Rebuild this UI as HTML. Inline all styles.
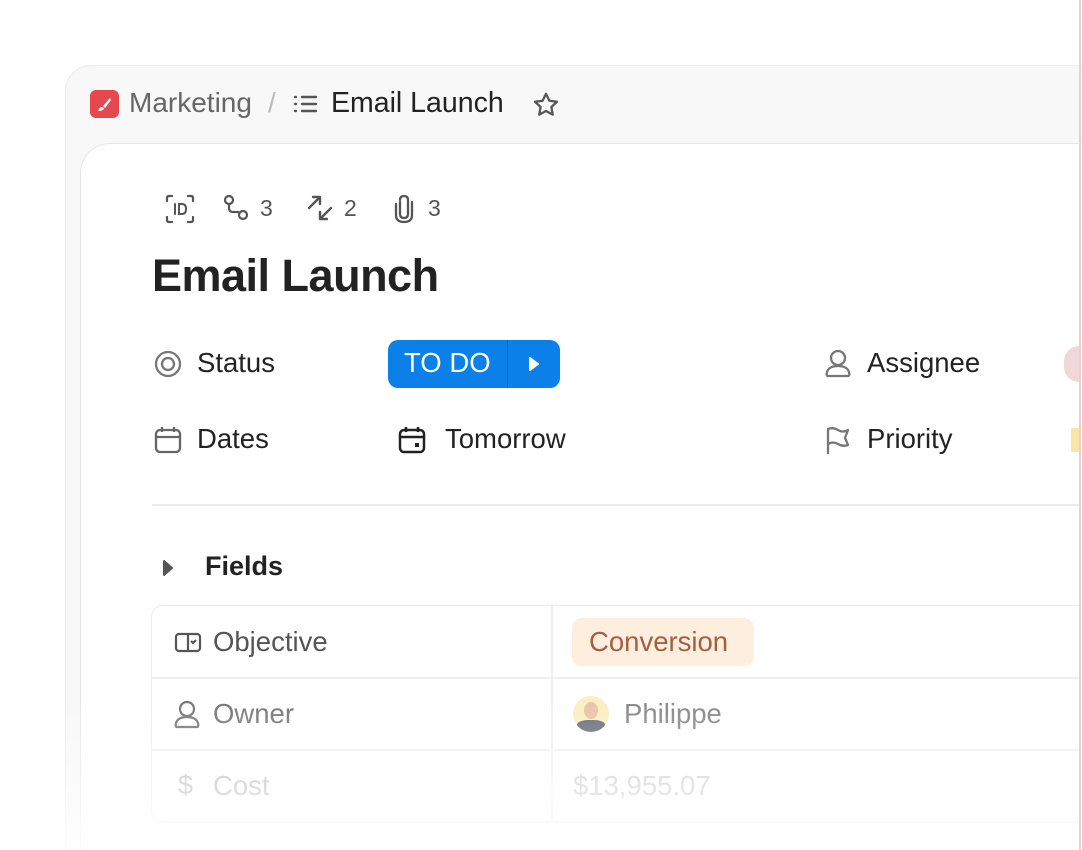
<!DOCTYPE html>
<html style="width:1082px;height:850px;overflow:hidden"><head><meta charset="utf-8"><style>
*{margin:0;padding:0;box-sizing:border-box}
body{width:1082px;height:850px;overflow:hidden;background:#fff;font-family:"Liberation Sans",sans-serif;position:relative}
.outer{position:absolute;left:65px;top:65px;width:1017px;height:785px;background:#f8f8f8;border:1px solid #ececec;border-bottom:none;border-right:none;border-radius:26px 0 0 0}
.card{position:absolute;left:80px;top:143px;width:1002px;height:707px;background:#fff;border:1px solid #e6e6e6;border-bottom:none;border-right:none;border-radius:30px 0 0 0}
.t{position:absolute;white-space:nowrap}
.fade{position:absolute;left:0;top:600px;width:1082px;height:250px;background:linear-gradient(rgba(255,255,255,0),rgba(255,255,255,0) 40%,rgba(255,255,255,.85));pointer-events:none}
.vline{position:absolute;left:1079px;top:0;width:2px;height:850px;background:#d8d8d8}
svg{position:absolute}
.wrap{position:absolute;left:0;top:0;width:1082px;height:850px;overflow:hidden}
</style></head><body><div class="wrap">
<div class="outer"></div>
<div style="position:absolute;left:90px;top:90px;width:29px;height:28px;background:#e5484d;border-radius:6px"></div>
<svg style="left:95px;top:95px" width="19" height="19" viewBox="0 0 19 19"><path d="M15 3 L8 11 L10 13 L16 5Z M7 12 C4 12 4 15 3 16 C6 16 9 15 9 13Z" fill="#fff"/></svg>
<div class="t" style="left:129px;top:87px;font-size:28px;color:#666">Marketing</div>
<div class="t" style="left:268px;top:87px;font-size:28px;color:#bbb">/</div>
<svg style="left:293px;top:93px" width="26" height="22" viewBox="0 0 26 22" stroke="#555" stroke-width="2.4" stroke-linecap="round"><path d="M2 4h1M9 4h14M2 11h1M9 11h14M2 18h1M9 18h14"/></svg>
<div class="t" style="left:331px;top:87px;font-size:28.5px;color:#222">Email Launch</div>
<svg style="left:531px;top:90px" width="30" height="30" viewBox="0 0 24 24" fill="none" stroke="#555" stroke-width="1.8" stroke-linejoin="round"><path d="M12 3l2.7 5.6 6.1.8-4.5 4.2 1.1 6.1L12 16.8 6.6 19.7l1.1-6.1L3.2 9.4l6.1-.8z"/></svg>
<div class="card"></div>
<svg style="left:165px;top:194px" width="30" height="30" viewBox="0 0 30 30" fill="none" stroke="#555" stroke-width="2.2" stroke-linecap="round"><path d="M2 7V4Q2 2 4 2H7M23 2h3q2 0 2 2v3M28 23v3q0 2-2 2h-3M7 28H4q-2 0-2-2v-3"/><path d="M10 10v10M14 10h3q4 0 4 5t-4 5h-3z" stroke-width="2"/></svg>
<svg style="left:222px;top:194px" width="28" height="28" viewBox="0 0 28 28" fill="none" stroke="#555" stroke-width="2.2"><circle cx="7" cy="6" r="4"/><circle cx="21" cy="21" r="4"/><path d="M7 10v4q0 4 4 4h6"/></svg>
<div class="t" style="left:260px;top:195px;font-size:23px;color:#555">3</div>
<svg style="left:306px;top:194px" width="28" height="28" viewBox="0 0 28 28" fill="none" stroke="#555" stroke-width="2.4" stroke-linecap="round" stroke-linejoin="round"><path d="M3 14L14 3M7 3h7v7M25 14L14 25M21 25h-7v-7"/></svg>
<div class="t" style="left:344px;top:195px;font-size:23px;color:#555">2</div>
<svg style="left:392px;top:194px" width="24" height="30" viewBox="0 0 24 30" fill="none" stroke="#555" stroke-width="2.3" stroke-linecap="round"><path d="M8 8v12q0 4 4 4t4-4V6q0-4-4-4t-4 4M4 10v11q0 7 8 7t8-7V8"/></svg>
<div class="t" style="left:428px;top:195px;font-size:23px;color:#555">3</div>
<div class="t" style="left:152px;top:250px;font-size:45px;font-weight:bold;color:#222;letter-spacing:-0.5px">Email Launch</div>
<svg style="left:154px;top:350px" width="28" height="28" viewBox="0 0 28 28" fill="none" stroke="#777" stroke-width="2.3"><circle cx="14" cy="14" r="12"/><circle cx="14" cy="14" r="6"/></svg>
<div class="t" style="left:197px;top:347px;font-size:27.5px;color:#222">Status</div>
<div style="position:absolute;left:388px;top:340px;width:172px;height:48px;background:#0a80e8;border-radius:10px"></div>
<div style="position:absolute;left:507px;top:340px;width:1px;height:48px;background:#0668c4"></div>
<div class="t" style="left:404px;top:347px;font-size:27.5px;color:#fff">TO DO</div>
<svg style="left:528px;top:356px" width="12" height="16" viewBox="0 0 12 16"><path d="M2 2L10 8L2 14Z" fill="#fff" stroke="#fff" stroke-linejoin="round" stroke-width="2"/></svg>
<svg style="left:154px;top:426px" width="28" height="28" viewBox="0 0 28 28" fill="none" stroke="#666" stroke-width="2.3"><rect x="2" y="4" width="24" height="22" rx="4"/><path d="M2 11h24M8 1v5M20 1v5"/></svg>
<div class="t" style="left:197px;top:423px;font-size:27.5px;color:#222">Dates</div>
<svg style="left:398px;top:426px" width="28" height="28" viewBox="0 0 28 28" fill="none" stroke="#222" stroke-width="2.5"><rect x="2" y="4" width="24" height="22" rx="4"/><path d="M2 11h24M8 1v5M20 1v5"/><rect x="17" y="17" width="4" height="4" fill="#222" stroke="none"/></svg>
<div class="t" style="left:445px;top:423px;font-size:27.5px;color:#222">Tomorrow</div>
<svg style="left:825px;top:349px" width="26" height="30" viewBox="0 0 26 30" fill="none" stroke="#777" stroke-width="2.3"><circle cx="13" cy="9" r="7"/><path d="M3 27q-2 0-1-4 2-6 11-6t11 6q1 4-1 4z"/></svg>
<div class="t" style="left:867px;top:347px;font-size:27.5px;color:#222">Assignee</div>
<div style="position:absolute;left:1064px;top:346px;width:15px;height:36px;border-radius:18px 0 0 18px;background:#f0d8d8"></div>
<svg style="left:826px;top:426px" width="26" height="30" viewBox="0 0 26 30" fill="none" stroke="#777" stroke-width="2.3" stroke-linejoin="round"><path d="M2 28V3q5-2 10 1t10 0l-3 8 3 7q-5 2-10-1t-10 0"/></svg>
<div class="t" style="left:867px;top:423px;font-size:27.5px;color:#222">Priority</div>
<div style="position:absolute;left:1071px;top:428px;width:8px;height:24px;background:#fbe6a6"></div>
<div style="position:absolute;left:152px;top:504px;width:927px;height:2px;background:#ececec"></div>
<svg style="left:162px;top:559px" width="12" height="18" viewBox="0 0 12 18"><path d="M2 2L10 9L2 16Z" fill="#555" stroke="#555" stroke-linejoin="round" stroke-width="2"/></svg>
<div class="t" style="left:205px;top:551px;font-size:27px;font-weight:bold;color:#222">Fields</div>
<div style="position:absolute;left:151px;top:605px;width:928px;height:218px;border:1.5px solid #ececec;border-right:none;border-radius:12px 0 0 12px"></div>
<div style="position:absolute;left:551px;top:606px;width:2px;height:216px;background:#f0f0f0"></div>
<div style="position:absolute;left:152px;top:677px;width:927px;height:2px;background:#efefef"></div>
<div style="position:absolute;left:152px;top:749px;width:927px;height:2px;background:#efefef"></div>
<svg style="left:174px;top:632px" width="28" height="22" viewBox="0 0 28 22" fill="none" stroke="#555" stroke-width="2.2"><rect x="2" y="2" width="24" height="17" rx="3"/><path d="M14 2v17M17 9l2 2 3-3"/></svg>
<div class="t" style="left:213px;top:626px;font-size:27.5px;color:#555">Objective</div>
<div style="position:absolute;left:572px;top:618px;width:182px;height:48px;background:#fdeedd;border-radius:10px"></div>
<div class="t" style="left:589px;top:626px;font-size:27.5px;color:#a35f43">Conversion</div>
<svg style="left:174px;top:700px" width="26" height="30" viewBox="0 0 26 30" fill="none" stroke="#777" stroke-width="2.2"><circle cx="13" cy="9" r="7"/><path d="M3 27q-2 0-1-4 2-6 11-6t11 6q1 4-1 4z"/></svg>
<div class="t" style="left:213px;top:698px;font-size:27.5px;color:#777">Owner</div>
<div style="position:absolute;left:573px;top:696px;width:36px;height:36px;border-radius:50%;background:#fbeec0;overflow:hidden"><div style="position:absolute;left:11px;top:6px;width:14px;height:17px;border-radius:50%;background:#e8c4a8"></div><div style="position:absolute;left:4px;top:24px;width:28px;height:12px;border-radius:40% 40% 0 0;background:#6a6e78"></div></div>
<div class="t" style="left:624px;top:698px;font-size:27.5px;color:#888">Philippe</div>
<div class="t" style="left:178px;top:770px;font-size:27px;color:#bbb">$</div>
<div class="t" style="left:213px;top:770px;font-size:27.5px;color:#bbb">Cost</div>
<div class="t" style="left:573px;top:770px;font-size:27.5px;color:#ccc">$13,955.07</div>
<div class="fade"></div>
<div class="vline"></div>
</div></body></html>
